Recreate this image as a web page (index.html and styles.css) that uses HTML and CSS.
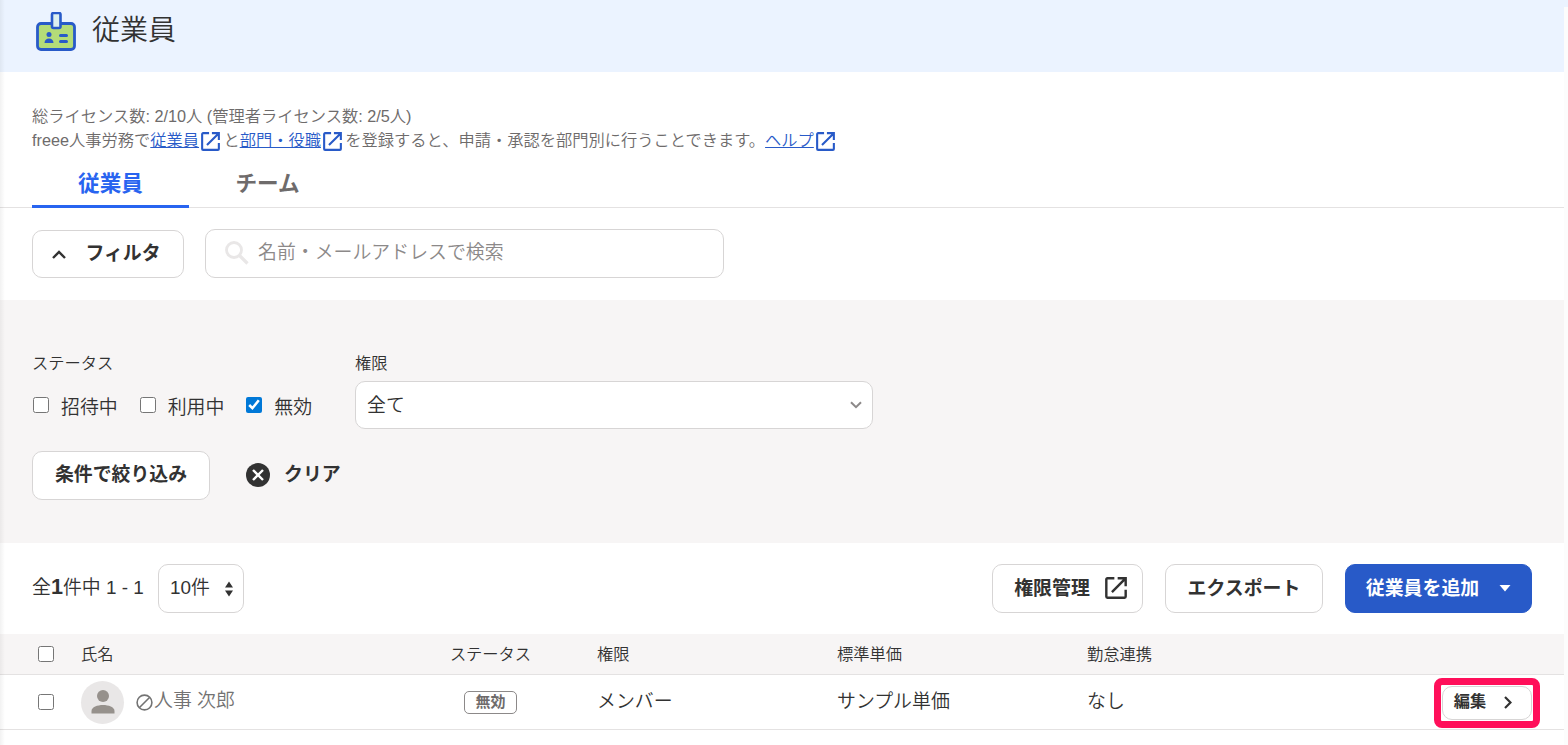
FILE: index.html
```html
<!DOCTYPE html>
<html lang="ja">
<head>
  <meta charset="UTF-8">
  <meta name="viewport" content="width=device-width, initial-scale=1.0">
  <title>従業員</title>
  <link rel="stylesheet" href="styles.css">
</head>
<body>

<svg class="sprite" width="0" height="0">
  <symbol id="icon-external" viewBox="0 0 20 20">
    <path d="M8.5 1.2H2.2a1 1 0 0 0-1 1v15.6a1 1 0 0 0 1 1h15.6a1 1 0 0 0 1-1V11.500M11.500 1.200h7.300v7.300M18 2L6.300 13.700" fill="none" stroke="currentColor" stroke-width="2.200"/>
  </symbol>
</svg>

<div class="page">
  <header class="page-header">
    <svg class="header-icon" width="40" height="40" viewBox="0 0 40 40">
      <rect x="1.500" y="11.500" width="37" height="26" rx="3.500" fill="#b4dc78" stroke="#285ac8" stroke-width="2.800"/>
      <rect x="16" y="1" width="8.500" height="15" rx="1.500" fill="#dcf0f0" stroke="#285ac8" stroke-width="2.600"/>
      <circle cx="13" cy="22.500" r="2.500" fill="#285ac8"/>
      <path d="M8.500 31c0-3 2-4.500 4.500-4.500s4.500 1.500 4.500 4.500z" fill="#285ac8"/>
      <path d="M24.500 23.500h6M24.500 29.500h6" stroke="#285ac8" stroke-width="3" stroke-linecap="round"/>
    </svg>
    <h1>従業員</h1>
  </header>

  <div class="description">
    <p>総ライセンス数: 2/10人 (管理者ライセンス数: 2/5人)</p>
    <p>freee人事労務で<a href="#">従業員</a><svg class="icon-link"><use href="#icon-external"/></svg>と<a href="#">部門・役職</a><svg class="icon-link"><use href="#icon-external"/></svg>を登録すると、申請・承認を部門別に行うことできます。<a href="#">ヘルプ</a><svg class="icon-link"><use href="#icon-external"/></svg></p>
  </div>

  <nav class="tabs">
    <a class="tab active">従業員</a>
    <a class="tab">チーム</a>
  </nav>

  <div class="search-bar">
    <button class="btn btn-filter" type="button">
      <svg width="14" height="9" viewBox="0 0 14 9"><path d="M1 8l6-6 6 6" fill="none" stroke="currentColor" stroke-width="2.400"/></svg>
      <span>フィルタ</span>
    </button>
    <label class="search-box">
      <svg width="24" height="24" viewBox="0 0 24 24"><circle cx="9" cy="9" r="7.500" fill="none" stroke="#e9e7e7" stroke-width="2.800"/><path d="M14.500 14.500l8 8" stroke="#e9e7e7" stroke-width="3.200"/></svg>
      <input type="text" placeholder="名前・メールアドレスで検索">
    </label>
  </div>

  <section class="filter">
    <div class="filter-fields">
      <div class="field-status">
        <div class="field-label">ステータス</div>
        <div class="checks">
          <label><input type="checkbox">招待中</label>
          <label><input type="checkbox">利用中</label>
          <label><input type="checkbox" checked>無効</label>
        </div>
      </div>
      <div class="field-role">
        <div class="field-label">権限</div>
        <div class="select">
          <span>全て</span>
          <svg width="12" height="8" viewBox="0 0 12 8"><path d="M1 1.200l5 5 5-5" fill="none" stroke="#8c8989" stroke-width="2"/></svg>
        </div>
      </div>
    </div>
    <div class="filter-actions">
      <button class="btn btn-apply" type="button">条件で絞り込み</button>
      <button class="btn-clear" type="button">
        <svg width="24" height="24" viewBox="0 0 24 24"><circle cx="12" cy="12" r="12" fill="#323232"/><path d="M7 7l10 10M17 7L7 17" stroke="#fff" stroke-width="2.400"/></svg>
        <span>クリア</span>
      </button>
    </div>
  </section>

  <div class="toolbar">
    <div class="count">全<b>1</b>件中 1 - 1</div>
    <div class="page-size">
      <span>10件</span>
      <svg width="8" height="16" viewBox="0 0 8 16"><path d="M0 6.500L4 .5l4 6zM0 9.500h8l-4 6z" fill="#323232"/></svg>
    </div>
    <div class="toolbar-actions">
      <button class="btn btn-role" type="button"><span>権限管理</span><svg width="22" height="22"><use href="#icon-external"/></svg></button>
      <button class="btn btn-export" type="button">エクスポート</button>
      <button class="btn btn-primary" type="button"><span>従業員を追加</span><svg width="12" height="7" viewBox="0 0 12 7"><path d="M.5 0h11L6 6.500z" fill="#fff"/></svg></button>
    </div>
  </div>

  <table class="members">
    <thead>
      <tr>
        <th class="col-check"><input type="checkbox"></th>
        <th class="col-name">氏名</th>
        <th class="col-status">ステータス</th>
        <th class="col-role">権限</th>
        <th class="col-price">標準単価</th>
        <th class="col-link">勤怠連携</th>
        <th class="col-edit"></th>
      </tr>
    </thead>
    <tbody>
      <tr>
        <td class="col-check"><input type="checkbox"></td>
        <td>
          <div class="member">
            <span class="avatar">
              <svg width="24" height="24" viewBox="0 0 24 24" fill="#96918c"><circle cx="12" cy="6" r="6"/><path d="M.5 23.500v-2.500c0-4 6-6 11.500-6s11.500 2 11.500 6v2.500z"/></svg>
            </span>
            <svg width="17" height="17" viewBox="0 0 17 17" fill="none" stroke="#737373" stroke-width="1.600"><circle cx="8.500" cy="8.500" r="7.400"/><path d="M3.500 13.500l10-10"/></svg>
            <span>人事 次郎</span>
          </div>
        </td>
        <td class="col-status"><span class="badge">無効</span></td>
        <td class="col-role">メンバー</td>
        <td>サンプル単価</td>
        <td>なし</td>
        <td class="col-edit">
          <div class="highlight">
            <button class="btn btn-edit" type="button"><span>編集</span><svg width="8" height="13" viewBox="0 0 8 13"><path d="M1 1l5.500 5.500L1 12" fill="none" stroke="currentColor" stroke-width="2.200"/></svg></button>
          </div>
        </td>
      </tr>
    </tbody>
  </table>
</div>

</body>
</html>
```
FILE: styles.css
```css
* {
  box-sizing: border-box;
}
body {
  margin: 0;
  height: 745px;
  overflow: hidden;
  font-family: "Liberation Sans", "Noto Sans CJK JP", sans-serif;
  font-size: 18.9px;
  font-weight: 350;
  color: #323232;
  background: linear-gradient(#ebf3ff 7px, #fcfcfc 7px);
}
.page {
  width: 1564px;
  height: 745px;
  background: #fff;
  position: relative;
}
/* shadow of the side menu */
.page::after {
  content: "";
  position: absolute;
  top: 0;
  left: 0;
  width: 5px;
  height: 100%;
  background: linear-gradient(to right, rgba(0, 0, 0, 0.05), rgba(0, 0, 0, 0));
}
.sprite {
  position: absolute;
}
svg {
  flex: none;
}
.page-header {
  height: 72px;
  padding: 12px 36px 0;
  display: flex;
  gap: 16px;
  background: #ebf3ff;
}
h1 {
  margin: 0;
  font-size: 28px;
  line-height: 38px;
  font-weight: 350;
}
.description {
  padding: 32px 32px 0;
  height: 88px;
  font-size: 16.25px;
  line-height: 24px;
  color: #6e6b6b;
  white-space: nowrap;
}
.description p {
  margin: 0;
  height: 24px;
}
.description a {
  color: #285ac8;
}
.icon-link {
  width: 19px;
  height: 19px;
  margin: 0 3px 0 2.400px;
  vertical-align: -5px;
  color: #285ac8;
}
.tabs {
  height: 48px;
  padding: 0 32px;
  display: flex;
  border-bottom: 1px solid #e4e2e2;
}
.tab {
  width: 157px;
  height: 48px;
  line-height: 48px;
  text-align: center;
  font-size: 21.6px;
  font-weight: bold;
  color: #6e6b6b;
}
.tab.active {
  color: #2864f0;
  border-bottom: 3px solid #2864f0;
}
.search-bar {
  height: 92px;
  padding: 21px 32px 0;
  display: flex;
  gap: 21px;
}
.btn {
  height: 49px;
  display: flex;
  align-items: center;
  justify-content: center;
  padding: 0 0 4px;
  font: bold 18.9px "Liberation Sans", "Noto Sans CJK JP", sans-serif;
  color: #323232;
  background: #fff;
  border: 1px solid #d7d5d5;
  border-radius: 10px;
  white-space: nowrap;
}
.btn-filter {
  width: 152px;
  height: 48px;
  margin-top: 1px;
  padding: 0 3px 5px 0;
  gap: 19px;
}
.btn-filter svg {
  margin-top: 5px;
}
.search-box {
  width: 519px;
  height: 49px;
  padding: 0 19px 2px;
  display: flex;
  align-items: center;
  gap: 9px;
  border: 1px solid #d7d5d5;
  border-radius: 10px;
}
.search-box input {
  flex: 1;
  padding: 0;
  border: 0;
  font: inherit;
  outline: 0;
}
.search-box input::placeholder {
  color: #8c8989;
}
.filter {
  height: 243px;
  padding: 50px 32px 0;
  background: #f7f5f5;
}
.filter-fields {
  display: flex;
  height: 101px;
}
.field-status {
  width: 323px;
}
.field-label {
  height: 31px;
  font-size: 16.25px;
  line-height: 26px;
}
.checks {
  display: flex;
  gap: 21px;
  height: 48px;
}
.checks label {
  display: flex;
  align-items: center;
  padding-top: 1px;
}
.checks input {
  width: 16px;
  height: 16px;
  margin: -2px 12px 0 1px;
}
input[type="checkbox"] {
  accent-color: #0078d7;
}
.select {
  width: 518px;
  height: 48px;
  padding: 0 10px 4px 11px;
  display: flex;
  align-items: center;
  justify-content: space-between;
  background: #fff;
  border: 1px solid #d7d5d5;
  border-radius: 10px;
}
.select svg {
  margin-top: 4px;
}
.filter-actions {
  display: flex;
  align-items: center;
  gap: 36px;
}
.btn-apply {
  width: 178px;
  padding-bottom: 6px;
}
.btn-clear {
  display: flex;
  align-items: center;
  gap: 14px;
  padding: 0 0 2px;
  border: 0;
  background: none;
  font: bold 18.9px "Liberation Sans", "Noto Sans CJK JP", sans-serif;
  color: #323232;
}
.btn-clear span {
  margin-top: -5px;
}
.toolbar {
  height: 91px;
  padding: 21px 32px 0;
  display: flex;
}
.count {
  width: 126px;
  line-height: 48px;
  white-space: nowrap;
}
.count b {
  font-size: 21.6px;
  font-weight: 700;
  line-height: 1;
}
.page-size {
  width: 86px;
  height: 49px;
  padding: 0 10px 0 11px;
  display: flex;
  align-items: center;
  justify-content: space-between;
  border: 1px solid #d7d5d5;
  border-radius: 10px;
}
.page-size span {
  margin-top: -6px;
}
.toolbar-actions {
  margin-left: auto;
  display: flex;
  gap: 22px;
}
.btn-role {
  width: 151px;
  padding-left: 6px;
  gap: 15px;
}
.btn-role svg {
  margin-top: 3px;
}
.btn-export {
  width: 158px;
}
.btn-primary {
  width: 187px;
  gap: 20px;
  color: #fff;
  background: #285ac8;
  border-color: #285ac8;
}
.btn-primary svg {
  margin-top: 4px;
}
.members {
  width: 1564px;
  table-layout: fixed;
  border-collapse: separate;
  border-spacing: 0;
}
.members th,
.members td {
  padding: 0;
  text-align: left;
  border-bottom: 1px solid #e4e2e2;
}
.members th {
  height: 41px;
  padding-bottom: 2px;
  font-size: 16.25px;
  font-weight: 350;
  background: #f7f5f5;
}
.members td {
  height: 55px;
  line-height: 50px;
}
.members .col-check {
  width: 81px;
  padding-bottom: 0;
  line-height: 0;
}
.members input {
  width: 16px;
  height: 16px;
  margin: 0 0 0 38px;
  vertical-align: middle;
}
.col-name {
  width: 350px;
}
.members .col-status {
  width: 119px;
  text-align: center;
}
.members td.col-status {
  padding-bottom: 2px;
}
.members .col-role {
  width: 287px;
  padding-left: 47px;
}
.col-price {
  width: 250px;
}
.member {
  display: flex;
  align-items: center;
  color: #737373;
}
.member > svg {
  margin: 1px 1px 0 12px;
}
.avatar {
  width: 43px;
  height: 43px;
  display: flex;
  align-items: center;
  justify-content: center;
  border-radius: 50%;
  background: #e9e7e7;
}
.member > span:last-child {
  margin-top: -2px;
}
.badge {
  display: inline-block;
  width: 53px;
  height: 23px;
  line-height: 19px;
  font-size: 15px;
  font-weight: bold;
  color: #6e6b6b;
  border: 1px solid #8c8989;
  border-radius: 5px;
  vertical-align: middle;
}
.members .col-edit {
  width: 130px;
}
.highlight {
  width: 106px;
  height: 50px;
  border: 7px solid #ff0f5a;
  border-radius: 8px;
  margin-top: 2px;
}
.btn-edit {
  width: 90px;
  height: 34px;
  margin: 1px;
  padding: 0 8px 6px 0;
  font-size: 16.2px;
  gap: 18px;
}
.btn-edit svg {
  margin-top: 4px;
}
```
